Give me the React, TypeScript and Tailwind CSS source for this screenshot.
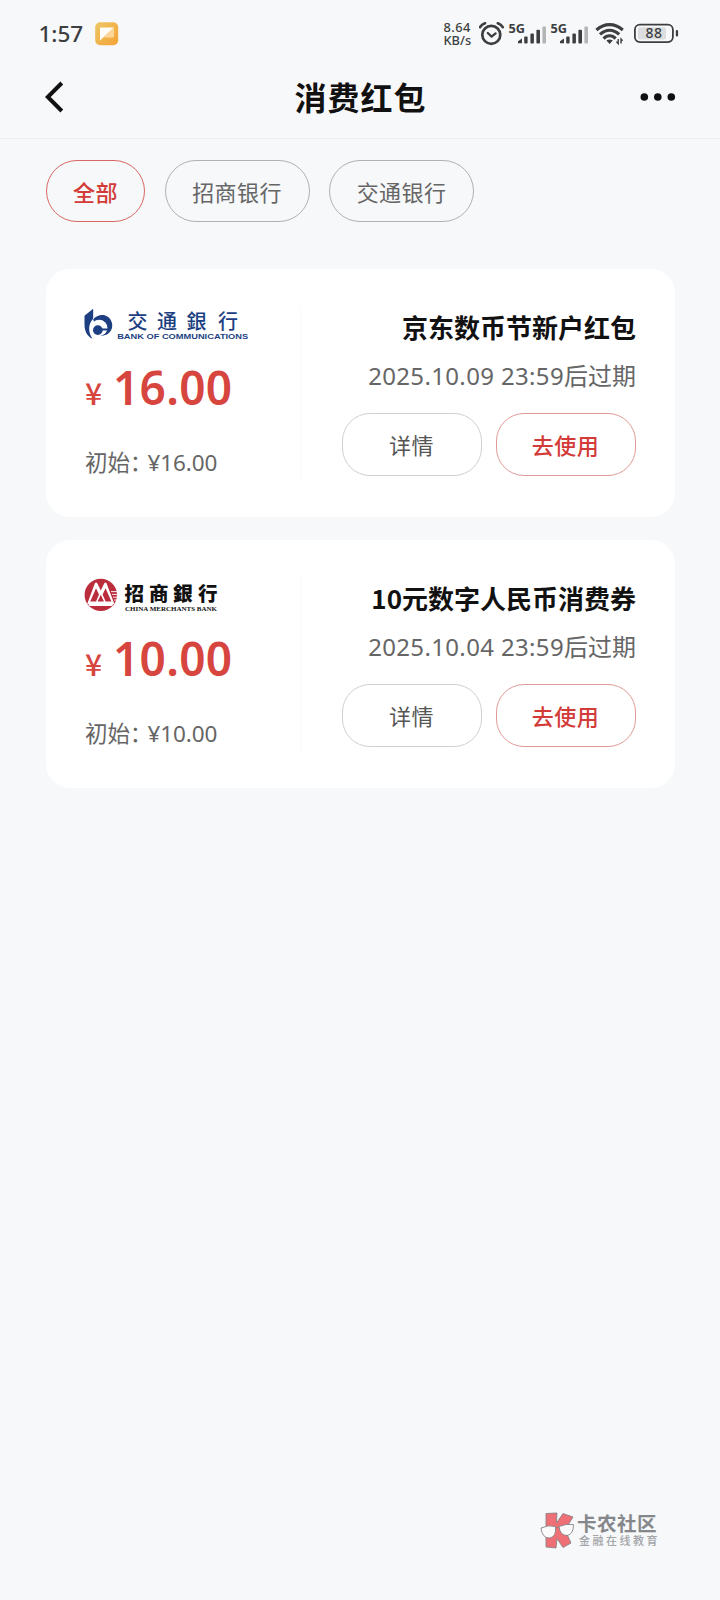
import type { ReactNode } from 'react';

const tabs = [
  { label: '全部', width: 'w-[99px]', active: true },
  { label: '招商银行', width: 'w-[145px]', active: false },
  { label: '交通银行', width: 'w-[145px]', active: false },
];

const SignalBars = () => (
  <div className="flex h-[24px] w-[41.5px] items-start">
    <svg className="overflow-visible" width="41" height="24" viewBox="0 0 41 24" fill="#3c3e40">
      <text x="-0.5" y="10.5" fontSize="12.5" fontWeight="700" fontFamily="Noto Sans, sans-serif" textLength="16.5" lengthAdjust="spacingAndGlyphs">
        5G
      </text>
      <path d="M9 21.3v-2l4-2.8v4.8z" />
      <rect x="15.2" y="14.5" width="3.4" height="7" rx="1" />
      <rect x="21.4" y="11.5" width="3.5" height="10" rx="1" />
      <rect x="27.4" y="7.8" width="3.6" height="13.7" rx="1" />
      <rect x="33.4" y="4.5" width="3.6" height="17" rx="1" fill="#b3b5b7" />
    </svg>
  </div>
);

const StatusBar = () => (
  <div className="flex h-[67px] items-center pl-[38px] text-[#3c3e40]">
    <span className="w-[57px] pl-[0.5px] font-['Noto_Sans'] text-[22.5px] font-medium">1:57</span>
    <svg width="24" height="24" viewBox="0 0 24 24">
      <defs>
        <linearGradient id="note" x1="0" y1="0" x2="1" y2="1">
          <stop offset="0" stopColor="#edc665" />
          <stop offset="1" stopColor="#f5a336" />
        </linearGradient>
      </defs>
      <rect x="0.2" y="0.2" width="23" height="23" rx="5" fill="url(#note)" />
      <path d="M5 5.5h14L5 18.5z" fill="#fffdf5" />
      <path d="M19 5.5v8.5q0 1.5-1.5 1.5H8.5z" fill="#fbd79a" />
    </svg>

    <div className="ml-[324.5px] flex w-[35.5px] flex-col font-['Noto_Sans'] text-[12.8px] leading-[12.5px] font-medium">
      <span className="tracking-[0.5px]">8.64</span>
      <span>KB/s</span>
    </div>
    <svg className="mr-[5px]" width="25" height="24" viewBox="0 0 25 24" fill="none" stroke="#3c3e40">
      <circle cx="12.3" cy="12.8" r="9" strokeWidth="2.7" />
      <path d="M8.8 11l3.8 3.6 4-3.2" strokeWidth="2.3" strokeLinejoin="round" strokeLinecap="round" />
      <path d="M1 5.2Q2.8 2.3 6 1.2M23.8 5.2Q22 2.3 18.8 1.2" strokeWidth="2.6" strokeLinecap="round" />
    </svg>
    <SignalBars />
    <SignalBars />
    <svg className="ml-[3px]" width="31" height="24" viewBox="0 0 31 24" fill="none" stroke="#3c3e40" strokeWidth="3.1">
      <path d="M1.4 8Q7.5 2.6 14.6 2.6T27.8 8" />
      <path d="M5 12.4Q9.5 8.2 14.6 8.2T24.2 12.4" />
      <path d="M8.6 16.6Q11.2 13.8 14.6 13.8T20.6 16.6" />
      <path d="M11.4 18.6Q14.6 16.6 17.8 18.6L14.6 22z" fill="#3c3e40" stroke="none" />
      <path d="M23.2 17v4.6l-1.8-2M26 21.6V17l1.6 1.8" strokeWidth="1.4" />
    </svg>
    <svg className="ml-[7px]" width="46" height="24" viewBox="0 0 46 24">
      <rect x="1.9" y="2.7" width="38" height="17.4" rx="5" fill="none" stroke="#3c3e40" strokeWidth="1.8" />
      <rect x="5" y="5.3" width="28" height="12.2" rx="2" fill="#dcdddf" />
      <rect x="42.8" y="8" width="2.3" height="6.6" rx="1.1" fill="#3c3e40" />
      <text x="12.4" y="16.4" fontSize="14" fontWeight="500" fill="#3c3e40" fontFamily="Noto Sans, sans-serif" textLength="16.5">
        88
      </text>
    </svg>
  </div>
);

const Header = () => (
  <header className="flex h-[72px] items-center justify-between border-b border-[#edeef0] pr-[44px] pb-[12px] pl-[45px]">
    <svg width="36" height="32" viewBox="0 0 36 32" fill="none" stroke="#111" strokeWidth="4">
      <path d="M16.8 2L2.8 16l14 14" />
    </svg>
    <h1 className="pb-[2px] text-[32px] leading-[40px] font-bold tracking-[1px] text-[#111]">消费红包</h1>
    <svg width="36" height="32" viewBox="0 0 36 32" fill="#111">
      <circle cx="4.3" cy="16" r="3.8" />
      <circle cx="17.8" cy="16" r="3.8" />
      <circle cx="31.3" cy="16" r="3.8" />
    </svg>
  </header>
);

const BocomLogo = () => (
  <svg className="overflow-visible" width="166" height="34" viewBox="0 0 166 34" fill="#1d3f82">
    <g transform="translate(0.5 0.8) scale(0.3333)">
      <path d="M0 21L26 0v30C12 44 9 68 24 90 7 81 0 66 0 46z" />
      <path d="M26 32C34 21 50 16 62 20 77 25 85 40 83 54 81 70 68 80 52 80 44 80 38 78 34 75L40 63z" />
      <circle cx="44" cy="58" r="25" fill="#fff" />
      <path d="M68 66Q63 80 46 80h8Q72 79 78 64z" />
      <circle cx="40" cy="64" r="14.5" />
      <path d="M46 59h33v6H46z" />
    </g>
    <g fontFamily="Noto Sans CJK SC, sans-serif" fontSize="20" fontWeight="500">
      <text x="43.5" y="21">交</text>
      <text x="73" y="21">通</text>
      <text x="102.5" y="21">銀</text>
      <text x="134" y="21">行</text>
    </g>
    <text x="33.2" y="30.6" fontFamily="Liberation Sans, sans-serif" fontSize="8" fontWeight="700" textLength="131" lengthAdjust="spacingAndGlyphs">
      BANK OF COMMUNICATIONS
    </text>
  </svg>
);

const CmbLogo = () => (
  <svg className="overflow-visible" width="140" height="34" viewBox="0 0 140 34">
    <circle cx="16.8" cy="15.9" r="16.2" fill="#bb2d3d" />
    <path d="M3.2 25L10.8 4.6Q12 2.4 13.4 4.6L16.8 11.6l3.4-7q1.2-2.2 2.4 0L30.4 25z" fill="#fff" />
    <path d="M6.2 22.6L12 9.2l3 6.4-3 7zM13.6 22.6l3.2-6.8 3.2 6.8zM21.6 22.6l-3-7 3-6.4 5.8 13.4z" fill="#bb2d3d" />
    <path d="M4.2 24.2h25.2l-1.2 2.8H5.4z" fill="#fff" />
    <path d="M27 12.6h6M28 15.4h5.4M29 18.2h4.2M30 21h3" stroke="#fff" strokeWidth="0.9" />
    <g fontFamily="Noto Sans CJK SC, sans-serif" fontSize="19.5" fontWeight="900" fill="#111">
      <text x="40.5" y="21.5">招</text>
      <text x="65" y="21.5">商</text>
      <text x="89" y="21.5">銀</text>
      <text x="114" y="21.5">行</text>
    </g>
    <text x="41" y="32" fontFamily="Liberation Serif, serif" fontSize="6.8" fontWeight="700" fill="#111" textLength="92" lengthAdjust="spacingAndGlyphs">
      CHINA MERCHANTS BANK
    </text>
  </svg>
);

const coupons = [
  { logo: <BocomLogo />, amount: '16.00', title: '京东数币节新户红包', expires: '2025.10.09 23:59' },
  { logo: <CmbLogo />, amount: '10.00', title: '10元数字人民币消费券', expires: '2025.10.04 23:59' },
];

type CouponProps = { logo: ReactNode; amount: string; title: string; expires: string };

const CouponCard = ({ logo, amount, title, expires }: CouponProps) => (
  <article className="flex h-[248px] rounded-[24px] bg-white pt-[36px] pr-[39px] pl-[38px]">
    <div className="flex h-[176px] w-[217px] shrink-0 flex-col border-r border-[#fafafa] pt-[3px]">
      {logo}
      <div className="mt-[15px] ml-[1px] flex h-[60px] items-baseline text-[#d7453f]">
        <span className="w-[28px] text-[30px] leading-[60px] font-medium">¥</span>
        <span className="font-['Noto_Sans'] text-[46px] leading-[60px] font-semibold tracking-[0.3px]">{amount}</span>
      </div>
      <p className="mt-[28px] ml-[1px] flex h-[32px] items-baseline text-[22.5px] leading-[32px] whitespace-nowrap text-[#666]">
        <span className="w-[62.5px] tracking-[-0.1px]">初始：</span>
        <span className="font-['Noto_Sans'] tracking-[-0.1px]">¥{amount}</span>
      </p>
    </div>
    <div className="flex flex-1 flex-col items-end">
      <h2 className="h-[40px] text-[26px] leading-[43px] font-bold whitespace-nowrap text-[#111]">{title}</h2>
      <p className="mt-[10px] flex h-[40px] items-baseline text-[24px] leading-[40px] whitespace-nowrap text-[#666]">
        <span className="font-['Noto_Sans'] text-[24px] tracking-[0.35px]">{expires}</span>后过期
      </p>
      <div className="mt-[18px] flex gap-[14px] text-[22px] tracking-[0.5px]">
        <button className="h-[63px] w-[140px] rounded-[28px] border border-[#d0d0d0] pr-[1px] text-[#555]">详情</button>
        <button className="h-[63px] w-[140px] rounded-[28px] border border-[#dd9a98] pr-[1px] font-medium text-[#d23b38]">去使用</button>
      </div>
    </div>
  </article>
);

const Watermark = () => (
  <div className="mt-auto mb-[50px] ml-[540px] flex h-[38px] items-start">
    <svg width="37" height="37" viewBox="0 0 37 37" stroke="#8a8285" strokeWidth="0.9">
      <path d="M6 1.5L17 1l-.6 10L23 1.5l10 3.5-8 13L31 31l-8 4.5-6-9-1 9.5-10-1z" fill="#ef6f77" />
      <path d="M1 16q7-3.5 14.5-1.5 1 10.5-6 11.5Q2 26 1 16zM19 14.5q7-3 14.5-2 0 10-6.5 11-7 0-8-9z" fill="#fbfbfc" />
      <path d="M15.5 16q2-1.5 3.5-.5" fill="none" />
    </svg>
    <div className="flex flex-col">
      <span className="text-[19.5px] leading-[22px] font-bold tracking-[0.5px] text-[#85878a]">卡农社区</span>
      <span className="pl-[2px] text-[11px] leading-[13px] font-medium tracking-[2.5px] text-[#a2a4a7]">金融在线教育</span>
    </div>
  </div>
);

const App = () => {
  return (
    <div className="flex h-[1600px] w-[720px] flex-col overflow-hidden bg-[#f6f8fa] font-['Noto_Sans_CJK_SC',sans-serif]">
      <StatusBar />
      <Header />
      <nav className="mt-[21px] ml-[46px] flex gap-[19.5px]">
        {tabs.map((tab) => (
          <button
            key={tab.label}
            className={`h-[62px] rounded-full border text-[22px] tracking-[0.4px] ${tab.width} ${
              tab.active ? 'border-[#da6763] font-medium text-[#d23b38]' : 'border-[#b0b1b3] text-[#666]'
            }`}
          >
            {tab.label}
          </button>
        ))}
      </nav>
      <main className="mt-[47px] flex flex-col gap-[23px] pr-[45px] pl-[46px]">
        {coupons.map((coupon) => (
          <CouponCard key={coupon.title} {...coupon} />
        ))}
      </main>
      <Watermark />
    </div>
  );
};

export default App;
